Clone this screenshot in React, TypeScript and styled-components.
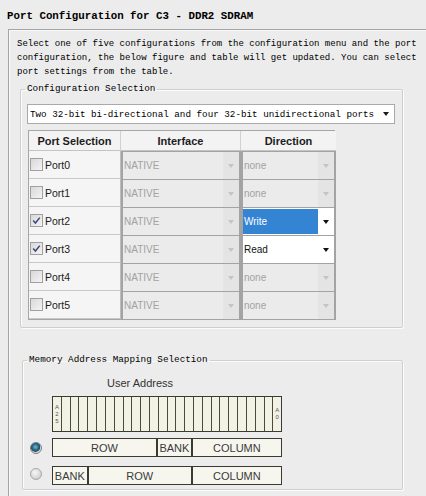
import React from 'react'
import styled, { createGlobalStyle } from 'styled-components'

const GlobalStyle = createGlobalStyle`
  html, body {
    margin: 0;
    padding: 0;
    background: #ececec;
  }
  * {
    box-sizing: border-box;
  }
`

const mono = `"Liberation Mono", "DejaVu Sans Mono", monospace`
const sans = `"Liberation Sans", Arial, sans-serif`

interface PortRow {
  name: string
  checked: boolean
  direction: string
  active?: 'selected' | 'enabled'
}

const ports: PortRow[] = [
  { name: 'Port0', checked: false, direction: 'none' },
  { name: 'Port1', checked: false, direction: 'none' },
  { name: 'Port2', checked: true, direction: 'Write', active: 'selected' },
  { name: 'Port3', checked: true, direction: 'Read', active: 'enabled' },
  { name: 'Port4', checked: false, direction: 'none' },
  { name: 'Port5', checked: false, direction: 'none' },
]

const bits = Array.from({ length: 26 }, (_, i) => 25 - i)

const App: React.FC = () => {
  return (
    <>
      <GlobalStyle />
      <Page>
        <Title>Port Configuration for C3 - DDR2 SDRAM</Title>
        <OuterPanel>
          <Description>
            Select one of five configurations from the configuration menu and the port
            <br />
            configuration, the below figure and table will get updated. You can select
            <br />
            port settings from the table.
          </Description>

          <Group $left={3} $top={3} $width={383}>
            <GroupLabel>Configuration Selection</GroupLabel>
            <ConfigSelect>
              <span>Two 32-bit bi-directional and four 32-bit unidirectional ports</span>
              <Arrow $color="#1a1a1a" />
            </ConfigSelect>

            <PortTable>
              <HeaderCell>Port Selection</HeaderCell>
              <HeaderCell>Interface</HeaderCell>
              <HeaderCell>Direction</HeaderCell>
              {ports.map((p) => (
                <React.Fragment key={p.name}>
                  <SelectCell>
                    <CheckBox>
                      {p.checked && (
                        <svg width="11" height="11" viewBox="0 0 11 11">
                          <path d="M2.2 5.6 L4.4 8 L8.8 2.6" fill="none" stroke="#3a4a78" strokeWidth="1.5" />
                        </svg>
                      )}
                    </CheckBox>
                    <PortName>{p.name}</PortName>
                  </SelectCell>
                  <ComboCell>
                    <ComboText $variant="disabled">NATIVE</ComboText>
                    <ComboButton $variant="disabled">
                      <Arrow $color="#c4c4c4" />
                    </ComboButton>
                  </ComboCell>
                  <ComboCell $variant={p.active}>
                    <ComboText $variant={p.active ?? 'disabled'}>{p.direction}</ComboText>
                    <ComboButton $variant={p.active ? 'enabled' : 'disabled'}>
                      <Arrow $color={p.active ? '#111' : '#c4c4c4'} />
                    </ComboButton>
                  </ComboCell>
                </React.Fragment>
              ))}
            </PortTable>
          </Group>

          <Group $left={5} $top={25} $width={381}>
            <GroupLabel>Memory Address Mapping Selection</GroupLabel>
            <MapGrid>
              <span />
              <UserAddress>User Address</UserAddress>
              <span />
              <BitBox>
                {bits.map((b, i) => (
                  <BitCell key={b}>
                    {(i === 0 || i === bits.length - 1) &&
                      `A${b}`.split('').map((c, k) => <BitChar key={k}>{c}</BitChar>)}
                  </BitCell>
                ))}
              </BitBox>
              <Radio $checked />
              <FieldBox>
                <Field $width={106}>ROW</Field>
                <Field $width={35}>BANK</Field>
                <Field $width={89} $last>COLUMN</Field>
              </FieldBox>
              <Radio />
              <FieldBox>
                <Field $width={36}>BANK</Field>
                <Field $width={105}>ROW</Field>
                <Field $width={89} $last>COLUMN</Field>
              </FieldBox>
            </MapGrid>
          </Group>
        </OuterPanel>
      </Page>
    </>
  )
}

const Page = styled.div`
  width: 426px;
  height: 496px;
  overflow: hidden;
  background: #ececec;
  color: #111;
`

const Title = styled.div`
  font-family: ${mono};
  font-weight: 700;
  font-size: 10.8px;
  line-height: 14px;
  padding: 9px 0 0 7px;
  height: 29px;
  white-space: nowrap;
  color: #000;
`

const OuterPanel = styled.div`
  margin-left: 8px;
  width: 440px;
  height: 480px;
  border-top: 1px solid #a4a4a4;
  border-left: 1px solid #a4a4a4;
  box-shadow: inset 1px 1px 0 #fafafa;
  padding: 7px 0 0 8px;
`

const Description = styled.div`
  font-family: ${mono};
  font-size: 9px;
  line-height: 14px;
  white-space: nowrap;
  color: #000;
`

const Group = styled.fieldset<{ $left: number; $top: number; $width: number }>`
  margin: ${(p) => p.$top}px 0 0 ${(p) => p.$left}px;
  width: ${(p) => p.$width}px;
  border: 1px solid #cfcfcf;
  box-shadow: 1px 1px 0 #fbfbfb, inset 1px 1px 0 #fbfbfb;
  border-radius: 2px;
  padding: 0 7px 7px 6px;
  min-inline-size: 0;
`

const GroupLabel = styled.legend`
  font-family: ${mono};
  font-size: 9.3px;
  line-height: 14px;
  padding: 0 2px;
  margin-left: -2px;
  color: #000;
  white-space: nowrap;
`

const ConfigSelect = styled.div`
  margin-top: 8px;
  width: 368px;
  height: 20px;
  background: #fff;
  border: 1px solid #a9a9a9;
  display: flex;
  align-items: center;
  justify-content: space-between;
  padding: 0 5px 0 2px;
  font-family: ${mono};
  font-size: 9.25px;
  color: #000;
  white-space: nowrap;
`

const Arrow = styled.span<{ $color: string }>`
  display: block;
  width: 0;
  height: 0;
  border-left: 3.5px solid transparent;
  border-right: 3.5px solid transparent;
  border-top: 4px solid ${(p) => p.$color};
`

const PortTable = styled.div`
  margin: 6px 0 0 1px;
  display: grid;
  grid-template-columns: 92px 120px 95px;
  grid-template-rows: 20px repeat(6, 28px);
  width: 307px;
  border: 1px solid #a6a6a6;
  background: #f3f3f3;
`

const HeaderCell = styled.div`
  display: flex;
  align-items: center;
  justify-content: center;
  font-family: ${sans};
  font-weight: 700;
  font-size: 11px;
  color: #1c1c1c;
  background: #f3f3f3;
  border-right: 1px solid #d0d0d0;
  border-bottom: 1px solid #c4c4c4;
  &:nth-child(3) {
    border-right: none;
  }
`

const SelectCell = styled.div`
  display: flex;
  align-items: center;
  gap: 2px;
  padding-left: 1px;
  background: #f5f5f5;
  border-right: 1px solid #bdbdbd;
  border-bottom: 1px solid #c8c8c8;
`

const CheckBox = styled.span`
  width: 13px;
  height: 13px;
  border: 1px solid #a0a0a0;
  background: linear-gradient(135deg, #d8d8d8 0%, #f4f4f4 100%);
  display: flex;
  align-items: center;
  justify-content: center;
`

const PortName = styled.span`
  font-family: ${sans};
  font-size: 10.5px;
  color: #1c1c1c;
`

const ComboCell = styled.div<{ $variant?: 'selected' | 'enabled' }>`
  display: flex;
  align-items: stretch;
  border: 2px solid #a3a3a3;
  border-top-width: 1px;
  border-bottom-width: 1px;
  margin-bottom: -1px;
  background: ${(p) => (p.$variant ? '#fff' : '#ebebeb')};
  padding: ${(p) => (p.$variant === 'selected' ? '1px 0' : '0')};
`

const ComboText = styled.span<{ $variant: 'selected' | 'enabled' | 'disabled' }>`
  flex: 1;
  display: flex;
  align-items: center;
  padding-left: 1px;
  font-family: ${sans};
  font-size: 10px;
  color: ${(p) => (p.$variant === 'disabled' ? '#a2a2a2' : p.$variant === 'selected' ? '#fff' : '#111')};
  background: ${(p) => (p.$variant === 'selected' ? '#3384d2' : 'transparent')};
`

const ComboButton = styled.span<{ $variant: 'enabled' | 'disabled' }>`
  width: 16px;
  display: flex;
  align-items: center;
  justify-content: center;
  background: ${(p) => (p.$variant === 'disabled' ? '#e4e4e4' : '#fff')};
`

const MapGrid = styled.div`
  display: grid;
  grid-template-columns: 23px 230px;
  grid-template-rows: 14px 36px 19px 19px;
  row-gap: 6px;
  margin-top: 9px;
  & > :nth-child(7) {
    margin-top: 3px;
  }
  & > :nth-child(8) {
    margin-top: 3px;
  }
`

const UserAddress = styled.div`
  font-family: ${sans};
  font-size: 11px;
  line-height: 14px;
  color: #333;
  padding-left: 55px;
  margin-bottom: -5px;
`

const BitBox = styled.div`
  display: flex;
  height: 36px;
  border: 1.5px solid #3a3a30;
  background: #f2f2e4;
`

const BitCell = styled.div`
  flex: 1;
  display: flex;
  flex-direction: column;
  align-items: center;
  justify-content: center;
  border-right: 1px solid #4a4a3e;
  &:last-child {
    border-right: none;
  }
`

const BitChar = styled.span`
  font-family: ${sans};
  font-size: 6px;
  line-height: 7px;
  color: #555;
`

const Radio = styled.span<{ $checked?: boolean }>`
  align-self: center;
  margin-left: 1px;
  width: 12px;
  height: 12px;
  border-radius: 50%;
  border: 1px solid ${(p) => (p.$checked ? '#6f7f88' : '#a8a8a8')};
  background: ${(p) =>
    p.$checked
      ? 'radial-gradient(circle at 45% 40%, #7fb6c8 0%, #2c6f8c 35%, #1d4c63 55%, #d6d6d6 62%, #f2f2f2 100%)'
      : 'radial-gradient(circle at 40% 35%, #f7f7f7 0%, #d3d3d3 70%, #bdbdbd 100%)'};
`

const FieldBox = styled.div`
  display: flex;
  height: 19px;
  border: 1.5px solid #3a3a30;
  background: #f6f6ee;
`

const Field = styled.div<{ $width: number; $last?: boolean }>`
  width: ${(p) => p.$width}px;
  display: flex;
  align-items: center;
  justify-content: center;
  font-family: ${sans};
  font-size: 11px;
  color: #3a3a3a;
  border-right: ${(p) => (p.$last ? 'none' : '2px solid #3a3a30')};
`

export default App
